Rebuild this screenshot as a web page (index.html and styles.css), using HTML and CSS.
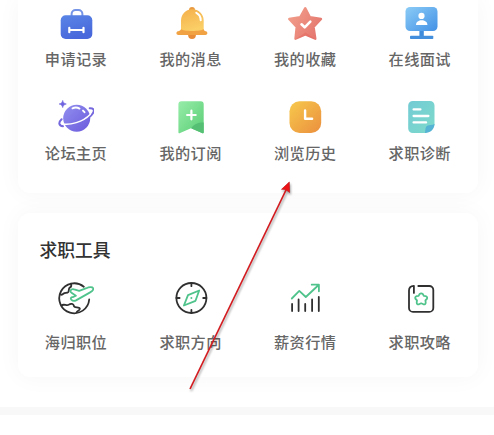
FILE: index.html
```html
<!DOCTYPE html>
<html lang="zh-CN">
<head>
<meta charset="utf-8">
<title>求职工具</title>
<link rel="stylesheet" href="styles.css">
</head>
<body>
<main class="page">
  <section class="card services">
    <div class="item">
      <svg class="icon" viewBox="0 0 36 36">
        <defs><linearGradient id="bag" x1="0" y1="0" x2="0.4" y2="1"><stop offset="0" stop-color="#5a85e6"/><stop offset="1" stop-color="#4868db"/></linearGradient></defs>
        <path d="M13.6 10V8a4 4 0 0 1 4-4h2.8a4 4 0 0 1 4 4v2" fill="none" stroke="#7494e8" stroke-width="2"/>
        <rect x="2.7" y="9.3" width="31.6" height="23.7" rx="5" fill="url(#bag)"/>
        <path d="M11.3 21.8v4.4M25.5 21.8v4.4M11.3 24h14.2" stroke="#fff" stroke-width="2.2" stroke-linecap="round"/>
      </svg>
      <span class="label">申请记录</span>
    </div>
    <div class="item">
      <svg class="icon" viewBox="0 0 36 36">
        <defs><linearGradient id="bell" x1="0" y1="0" x2="0.3" y2="1"><stop offset="0" stop-color="#f4b04b"/><stop offset="1" stop-color="#fbcf67"/></linearGradient></defs>
        <circle cx="19" cy="4" r="3" fill="#e99a40"/>
        <circle cx="19" cy="29.3" r="3.8" fill="#e98c38"/>
        <path d="M8 26V14.5a11.3 11.3 0 0 1 22.7 0V26z" fill="url(#bell)"/>
        <path d="M8 23c-.3 1.5-1.600 2-3 2.300-2.300.5-2 3.700.4 3.700h27c2.400 0 2.700-3.200.4-3.700-1.300-.3-1.900-.8-2.100-2.300-2 2.600-20.700 2.600-22.700 0z" fill="#f1a344"/>
        <path d="M23.300 6.800c3 1.500 4.400 4 4.400 7.400" fill="none" stroke="#fff" stroke-width="2" stroke-linecap="round"/>
      </svg>
      <span class="label">我的消息</span>
    </div>
    <div class="item">
      <svg class="icon" viewBox="0 0 36 36">
        <defs><linearGradient id="star" x1="0" y1="0" x2="1" y2="0.6"><stop offset="0" stop-color="#f3a18d"/><stop offset="1" stop-color="#e57870"/></linearGradient></defs>
        <path d="M18.300 2.200 22.900 11.200 34 13 26.500 20.800 28.300 32.700 18.300 28.300 8.500 32.700 9.700 20.800 2.200 13 13.300 11.200z" fill="url(#star)" stroke="url(#star)" stroke-width="2.400" stroke-linejoin="round"/>
        <path d="M8.300 33.300 18.500 26.500 28.800 33.200 18.500 29.500z" fill="#e4655d" opacity=".45"/>
        <path d="M14.500 18.300l3.200 3 5.600-5.600" fill="none" stroke="#fff" stroke-width="2.600" stroke-linecap="round" stroke-linejoin="round"/>
      </svg>
      <span class="label">我的收藏</span>
    </div>
    <div class="item">
      <svg class="icon" viewBox="0 0 36 36">
        <defs><linearGradient id="screen" x1="0" y1="0" x2="1" y2="1"><stop offset="0" stop-color="#8bccf6"/><stop offset="1" stop-color="#4391e6"/></linearGradient></defs>
        <rect x="17.400" y="24" width="4.400" height="7" fill="#3e8bdc"/>
        <rect x="8" y="29.700" width="23.300" height="3.300" rx=".8" fill="#438fdd"/>
        <rect x="3.500" y="1" width="32" height="24" rx="4.500" fill="url(#screen)"/>
        <circle cx="19.500" cy="9.900" r="3.100" fill="#fff"/>
        <path d="M14 18.900c0-6.200 11.400-6.200 11.400 0z" fill="#fff"/>
      </svg>
      <span class="label">在线面试</span>
    </div>
    <div class="item">
      <svg class="icon" viewBox="0 0 36 36">
        <defs><linearGradient id="planet" x1="0" y1="0" x2="1" y2="1"><stop offset="0" stop-color="#9190ef"/><stop offset="1" stop-color="#6b59dc"/></linearGradient></defs>
        <circle cx="18.700" cy="19.200" r="13.500" fill="url(#planet)"/>
        <path d="M3.600 20.200C.2 23.400.6 26.800 5 27.200M31.700 9.300c4.200-.2 5.100 2 3 5.200-.9 1.400-2.100 2.500-3.600 3.700" fill="none" stroke="#7568df" stroke-width="2" stroke-linecap="round"/>
        <path d="M3.600 24.800c8 2 21.700-2 28.500-9.300" fill="none" stroke="#fff" stroke-width="1.500" stroke-linecap="round"/>
        <path d="M14.500 9.300c2.300-1 5-.9 7 .3M25 11.600l1.500 1.600" stroke="#fff" stroke-width="1.900" stroke-linecap="round" fill="none"/>
        <path d="M4.700 1.400c.7 2.400 1.200 2.900 3.600 3.600-2.400.7-2.900 1.200-3.600 3.600C4 6.200 3.500 5.700 1.100 5c2.400-.7 2.900-1.200 3.600-3.600z" fill="#6f63df" stroke="#6f63df" stroke-width=".6"/>
      </svg>
      <span class="label">论坛主页</span>
    </div>
    <div class="item">
      <svg class="icon" viewBox="0 0 36 36">
        <defs>
          <linearGradient id="mark" x1="0" y1="0" x2="1" y2="1"><stop offset="0" stop-color="#98eda9"/><stop offset="1" stop-color="#59cd75"/></linearGradient>
          <clipPath id="markShape"><path d="M8.400 2.300h19.300a3 3 0 0 1 3 3v27.900c0 1-.8 1.400-1.700.9L18 29.200 7.100 34.100c-.9.500-1.700.100-1.700-.9V5.300a3 3 0 0 1 3-3z"/></clipPath>
        </defs>
        <g clip-path="url(#markShape)"><path d="M5 2h26v33H5z" fill="url(#mark)"/><path d="M18 29.300c3-4.300 7-6 13-5.800V35H26z" fill="#55c074"/></g>
        <path d="M18.400 11.700v8.600M14.100 16h8.600" stroke="#fff" stroke-width="2.200" stroke-linecap="round"/>
      </svg>
      <span class="label">我的订阅</span>
    </div>
    <div class="item">
      <svg class="icon" viewBox="0 0 36 36">
        <defs><linearGradient id="clock" x1="0" y1="0" x2="1" y2="1"><stop offset="0" stop-color="#f7c94c"/><stop offset="1" stop-color="#eb8f3e"/></linearGradient></defs>
        <rect x="2.500" y="2.300" width="31.700" height="31.700" rx="10" fill="url(#clock)"/>
        <path d="M18.100 11.500v8.200h7" fill="none" stroke="#fff" stroke-width="2.400" stroke-linecap="round" stroke-linejoin="round"/>
      </svg>
      <span class="label">浏览历史</span>
    </div>
    <div class="item">
      <svg class="icon" viewBox="0 0 36 36">
        <defs><linearGradient id="doc" x1="0" y1="0" x2="1" y2="1"><stop offset="0" stop-color="#73cbd4"/><stop offset="1" stop-color="#7edacb"/></linearGradient></defs>
        <path d="M10.700 2h17.300a4.500 4.500 0 0 1 4.500 4.500V26l-8.500 8H10.700a4.500 4.500 0 0 1-4.500-4.500v-23A4.500 4.500 0 0 1 10.700 2z" fill="url(#doc)"/>
        <path d="M23 34c.7-4 0-5.700 2.300-7.200 1.900-1.200 4.700-.5 7.200-1.800 0 5-4 9-9.500 9z" fill="#55b3d3"/>
        <path d="M11.600 10.400h6.800M11.600 17h14.800M11.600 23.400h12.500" stroke="#fff" stroke-width="2.300" stroke-linecap="round"/>
      </svg>
      <span class="label">求职诊断</span>
    </div>
  </section>

  <section class="card tools">
    <h2 class="title">求职工具</h2>
    <div class="tool-grid">
      <div class="item">
        <svg class="icon line" viewBox="0 0 36 36">
          <path class="ink" d="M25.800 6.700A15 15 0 1 0 31.200 19.500"/>
          <path class="ink" d="M13 3.700c.6 1.800.3 3.200-1.200 3.900-1.500.8-.5 3-1.500 4.500-1.200 1.700-3.500.1-4.800 1.600-.7.800-1.500 1.200-2.600 1"/>
          <path class="ink" d="M3.300 25.600c2.600-2.400 5.400.8 7.600-1 1.900-1.500 4.700-.7 4.900 1 .2 2 2.400 1.600 4.400 2 1.900.4 2.300 1.200.6 2.800-1.300 1.100-1.900.9-2.200 2"/>
          <path class="accent" d="M12.700 10.300c.7-1.300 2-1.500 3.500-.9l5 1.400 7.200-2.600c2.600-1.200 6-1.400 6.700-.1.800 1.500-1.200 3.300-3.400 4.500L18 20.400c-1.700.8-3.700.3-4.700-.8-1-1.200-.3-2.600 1.400-2.400l3.200-1.500-4.400-3c-.8-.4-1.100-1.500-.8-2.400z"/>
        </svg>
        <span class="label">海归职位</span>
      </div>
      <div class="item">
        <svg class="icon line" viewBox="0 0 36 36">
          <circle class="ink" cx="18.400" cy="18" r="15"/>
          <path class="ink" d="M18.400 3v3.200M18.400 29.800V33M3.400 18h3.200M30.200 18h3.200"/>
          <path class="accent" d="M26.200 10.500 22.500 20.800 10.900 25.500 15 15.200z"/>
          <circle cx="18.400" cy="18" r="1" fill="#4fc38b"/>
        </svg>
        <span class="label">求职方向</span>
      </div>
      <div class="item">
        <svg class="icon line" viewBox="0 0 36 36">
          <path class="accent" d="M4.800 18.500 12.300 10.900 18.800 17 31.600 5M24.700 4.700h7.200v6.600"/>
          <path class="ink" d="M5.100 24v7M11.600 19.500V31M18.200 24v7M25.100 19.500V31M31.800 17v14"/>
        </svg>
        <span class="label">薪资行情</span>
      </div>
      <div class="item">
        <svg class="icon line" viewBox="0 0 36 36">
          <path class="ink" d="M16.300 6h11a4 4 0 0 1 4 4v17.900a4 4 0 0 1-4 4H11a4 4 0 0 1-4-4V10.500C7 7.500 8.500 6 11.900 5.800v7.100"/>
          <path class="accent" d="M17.500 14.200q1.700-1.800 3.400 0l.9 1.700 1.900.3q2.300.8 1.100 2.800l-1.400 1.400.3 2q.1 2.400-2.300 1.900l-2.200-1-2.200 1q-2.400.5-2.300-1.900l.3-2L13.600 19q-1.200-2 1.100-2.800l1.900-.3z"/>
        </svg>
        <span class="label">求职攻略</span>
      </div>
    </div>
  </section>
  <div class="divider"></div>

  <svg class="arrow" viewBox="0 0 110 220">
    <path d="M5 214 101.500 14" stroke="#d31b20" stroke-width="1.700" fill="none"/>
    <path d="M104.300 7 96.500 14.300 100.600 14.500 104.600 17.500z" fill="#ec1216" stroke="#c21b1f" stroke-width=".7"/>
  </svg>
</main>
</body>
</html>
```
FILE: styles.css
```css
* {
  box-sizing: border-box;
}

body {
  margin: 0;
  background: #fff;
  color: #666;
  font-family: "Noto Sans CJK SC", sans-serif;
}

.page {
  position: relative;
  height: 435px;
  overflow: hidden;
}

.card {
  width: 460px;
  margin-left: 18px;
  border-radius: 12px;
  background: #fff;
  box-shadow: 0 0 24px rgba(0, 0, 0, 0.04);
}

.services {
  display: grid;
  grid-template-columns: repeat(4, 114.6px);
  grid-template-rows: 64px 65px;
  row-gap: 29px;
  height: 193px;
  padding: 6px 0 0 0.7px;
  border-radius: 0 0 12px 12px;
}

.tools {
  height: 164px;
  margin-top: 20px;
  padding-top: 23px;
}

.title {
  margin: 0 0 18px 21.5px;
  color: #333;
  font-size: 17.8px;
  font-weight: 500;
  line-height: 26px;
}

.tool-grid {
  display: grid;
  grid-template-columns: repeat(4, 114.6px);
  padding-left: 0.7px;
}

.item {
  display: flex;
  flex-direction: column;
  align-items: center;
  justify-content: space-between;
}

.tools .item {
  height: 73px;
}

.icon {
  width: 36px;
  height: 36px;
}

.line {
  fill: none;
  stroke-width: 1.8;
  stroke-linecap: round;
  stroke-linejoin: round;
}

.ink {
  stroke: #303030;
}

.accent {
  stroke: #4fc38b;
}

.label {
  font-size: 15.2px;
  font-weight: 500;
  letter-spacing: 0.4px;
  line-height: 24px;
  white-space: nowrap;
}

.divider {
  height: 8px;
  margin-top: 30px;
  background: #f8f8f8;
}

.arrow {
  position: absolute;
  top: 175px;
  left: 185px;
  width: 110px;
  height: 220px;
  filter: drop-shadow(1px 2px 1px rgba(0, 0, 0, 0.35));
}
```
